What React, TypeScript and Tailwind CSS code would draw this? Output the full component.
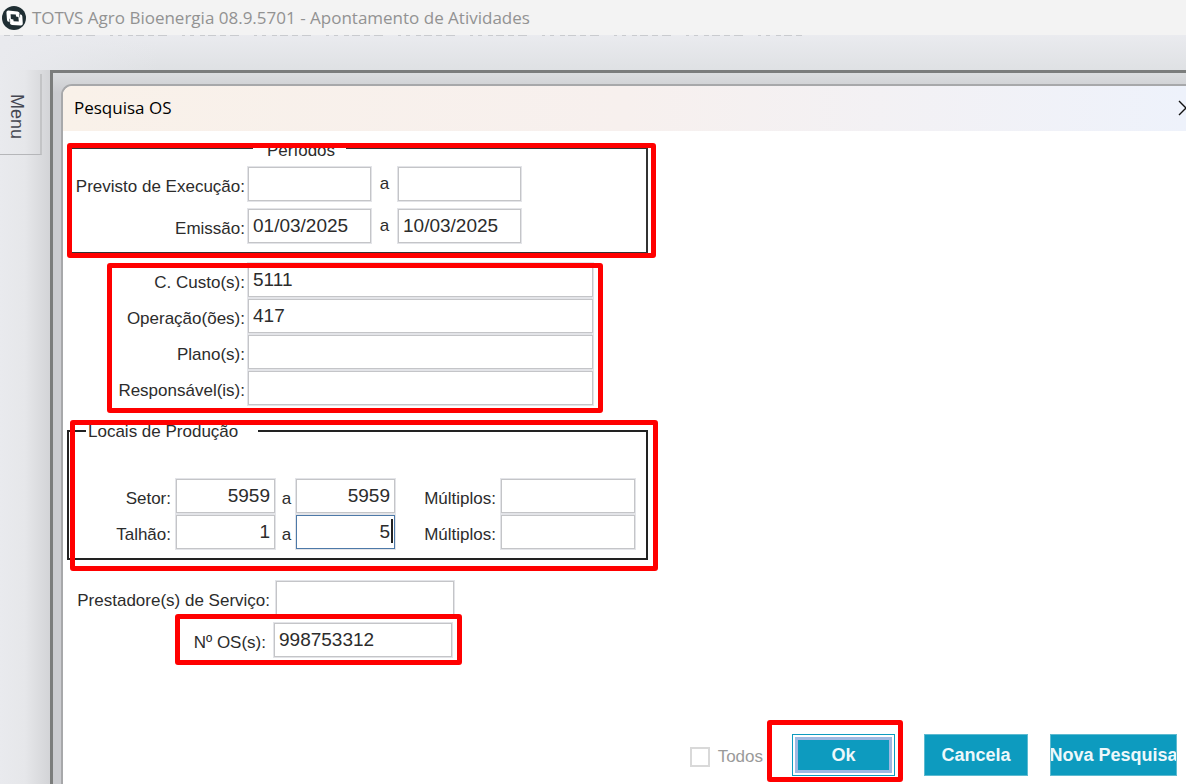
import type { InputHTMLAttributes, ReactNode } from "react";

const Highlight = ({ className }: { className: string }) => (
  <span
    aria-hidden="true"
    className={`pointer-events-none absolute z-10 rounded-[3px] border-[5px] border-[#ff0000] ${className}`}
  />
);

const Field = ({ className = "", ...props }: InputHTMLAttributes<HTMLInputElement>) => (
  <input
    type="text"
    className={`h-[34px] shrink-0 border border-[#c4c5c8] bg-white px-1 pb-px text-[19px] leading-6 text-[#2c2c2c] ring-1 ring-[#e3e4e8] outline-none focus:border-[#4d79a8] ${className}`}
    {...props}
  />
);

const Label = ({ htmlFor, className, children }: { htmlFor: string; className: string; children: ReactNode }) => (
  <label htmlFor={htmlFor} className={`shrink-0 pt-1.5 text-right whitespace-nowrap ${className}`}>
    {children}
  </label>
);

const Logo = () => (
  <svg viewBox="0 0 24 24" className="size-6 shrink-0" aria-hidden="true">
    <circle cx="12" cy="12" r="12" fill="#1f2e33" />
    <path d="M6.2 4.6 L15.5 5.4 Q17.6 5.7 17.7 7.6 L17.8 8.4 L19 8.6 Q20.2 9 20.3 10.3 L20.8 17.4 Q20.8 19.6 18.8 19.5 L10 18.9 Q8 18.6 7.8 16.8 L7.7 15.9 L6.6 15.8 Q5.2 15.4 5 14 L4.4 6.6 Q4.4 4.7 6.2 4.6Z" fill="#fff" />
    <path d="M8.6 8.2 L13.8 8.6 L14 10.6 L16.4 10.9 L16.8 15.6 L11.6 15.2 L11.4 13.4 L8.9 13Z" fill="#1f2e33" />
    <path d="M17.4 7.6 L17.7 11.4 M7.8 16.8 L7.5 12.8" stroke="#1f2e33" strokeWidth="0.6" />
  </svg>
);

const periods = [
  { id: "execucao", label: "Previsto de Execução:", from: "", to: "" },
  { id: "emissao", label: "Emissão:", from: "01/03/2025", to: "10/03/2025" },
];

const filters = [
  { id: "custo", label: "C. Custo(s):", value: "5111" },
  { id: "operacao", label: "Operação(ões):", value: "417" },
  { id: "plano", label: "Plano(s):", value: "" },
  { id: "responsavel", label: "Responsável(is):", value: "" },
];

const places = [
  { id: "setor", label: "Setor:", from: "5959", to: "5959" },
  { id: "talhao", label: "Talhão:", from: "1", to: "5", active: true },
];

const SearchForm = () => (
  <div className="pt-1.5 pl-1">
    {/* Períodos */}
    <div className="relative w-[581px]">
      <fieldset className="border-2 border-[#333] pt-2 pb-[9px]">
        <legend className="ml-[184px] h-[22px] w-[93px] pt-1 pl-3.5 leading-5">Períodos</legend>
        <div className="flex flex-col gap-2">
          {periods.map((p) => (
            <div key={p.id} className="flex items-center">
              <Label htmlFor={p.id} className="mr-[3px] w-44">
                {p.label}
              </Label>
              <Field id={p.id} defaultValue={p.from} className="w-[123px]" />
              <span className="w-[27px] text-center">a</span>
              <Field aria-label={`${p.label} até`} defaultValue={p.to} className="w-[123px]" />
            </div>
          ))}
        </div>
      </fieldset>
      <Highlight className="top-1.5 -right-2 -bottom-1 left-0" />
    </div>

    <div className="relative mt-[9px] flex w-fit flex-col gap-0.5">
      {filters.map((f) => (
        <div key={f.id} className="flex items-center">
          <Label htmlFor={f.id} className="mr-[3px] w-[178px]">
            {f.label}
          </Label>
          <Field id={f.id} defaultValue={f.value} className="w-[345px]" />
        </div>
      ))}
      <Highlight className="top-0 -right-2.5 -bottom-2 left-10" />
    </div>

    {/* Locais de Produção */}
    <div className="relative mt-[15px] w-[581px]">
      <fieldset className="border-2 border-[#222] pt-[37px] pb-[9px]">
        <legend className="ml-[17px] h-[22px] w-[172px] pt-0.5 pl-0.5 leading-5">Locais de Produção</legend>
        <div className="flex flex-col gap-0.5">
          {places.map((p) => (
            <div key={p.id} className="flex items-center">
              <Label htmlFor={p.id} className="mr-[5px] w-[102px]">
                {p.label}
              </Label>
              <Field id={p.id} defaultValue={p.from} className="w-[99px] text-right" />
              <span className="w-[21px] pt-1.5 pl-0.5 text-center">a</span>
              <div className="relative flex">
                <Field
                  aria-label={`${p.label} até`}
                  defaultValue={p.to}
                  className={`w-[99px] text-right ${p.active ? "border-[#4d79a8]!" : ""}`}
                />
                {p.active && <span className="absolute top-1 right-0.5 h-6 w-0.5 bg-[#222]" />}
              </div>
              <Label htmlFor={`${p.id}-multiplos`} className="mr-[5px] w-[101px]">
                Múltiplos:
              </Label>
              <Field id={`${p.id}-multiplos`} className="w-[134px]" />
            </div>
          ))}
        </div>
      </fieldset>
      <Highlight className="top-0 -right-2.5 -bottom-[11px] left-[3px]" />
    </div>

    <div className="mt-[21px] flex w-fit flex-col gap-2">
      <div className="flex items-center">
        <Label htmlFor="prestador" className="mr-1.5 w-[203px]">
          Prestadore(s) de Serviço:
        </Label>
        <Field id="prestador" className="w-[178px]" />
      </div>
      <div className="relative flex w-fit items-center">
        <Label htmlFor="os" className="mr-2 w-[199px]">
          Nº OS(s):
        </Label>
        <Field id="os" defaultValue="998753312" className="w-[178px]" />
        <Highlight className="-top-[9px] -right-2.5 -bottom-2 left-[108px]" />
      </div>
    </div>
  </div>
);

const action =
  "h-[42px] overflow-hidden border border-[#5dbad0] bg-[#0d9bbf] text-[18px] font-bold whitespace-nowrap text-[#eef8fb]";

const Footer = () => (
  <div className="mt-auto flex items-center justify-end pt-4 pr-[9px] pb-2">
    <label className="flex items-center gap-2 pt-1 text-[#9a9a9a]">
      <input type="checkbox" className="size-5 appearance-none border-2 border-[#d9d9d9] bg-white" />
      Todos
    </label>
    <div className="relative ml-[29px]">
      <button className={`${action} block w-[103px] border-[#0d9bbf]! bg-white! p-0.5`}>
        <span className="flex h-full items-center justify-center border-[3px] border-[#9fb9e2] bg-[#0d9bbf]">Ok</span>
      </button>
      <Highlight className="-top-[14px] -right-2 -bottom-1.5 -left-[25px]" />
    </div>
    <button className={`${action} ml-[29px] w-[104px]`}>Cancela</button>
    <button className={`${action} ml-[22px] flex w-[127px] items-center justify-center`}>Nova Pesquisa</button>
  </div>
);

const App = () => {
  return (
    <div className="flex min-h-screen flex-col overflow-hidden bg-[#e6e7eb] font-['Liberation_Sans',Arial,sans-serif] text-[17px] leading-5 text-[#2c2c2c]">
      <header className="flex h-[35px] items-center gap-1.5 bg-[#f3f3f3] pl-0.5 font-['Open_Sans','Noto_Sans',sans-serif] text-[17px] text-[#929292]">
        <Logo />
        <h1 className="whitespace-nowrap">TOTVS Agro Bioenergia 08.9.5701 - Apontamento de Atividades</h1>
      </header>

      <div className="h-[35px] bg-[linear-gradient(to_right,#e9eaee,transparent_160px),linear-gradient(#eaebef,#dfe1e4)]">
        {/* edge of the caption hidden under the title bar */}
        <svg className="block h-px w-[806px]" aria-hidden="true">
          <line x1="4" y1="0.5" x2="806" y2="0.5" stroke="#c9cbcf" strokeDasharray="6 4 9 15 3 5 4 6 5 3 8 4" />
        </svg>
      </div>

      <div className="flex flex-1">
        <aside className="w-[50px] shrink-0 bg-linear-to-r from-[#e9eaee] via-[#e6e7ea] to-[#d3d4d7] pt-1">
          <div className="flex h-[81px] w-[42px] justify-center border-r-2 border-b border-r-[#c3c4c6] border-b-[#b5b6b9] pt-5 pr-1.5">
            <button className="h-fit text-[18px] leading-5 text-[#454752] [writing-mode:vertical-rl]">Menu</button>
          </div>
        </aside>

        <main className="flex min-w-0 flex-1 border-t-[3px] border-l-[3px] border-[#7b7d7c] bg-linear-to-b from-[#dbdddf] to-[#cbccd0] to-[20px] pt-[11px] pl-2">
          <section className="flex min-w-0 flex-1 flex-col overflow-hidden rounded-tl-[11px] border-t-2 border-l-2 border-[#a7a8aa] bg-white">
            <div className="flex h-[45px] shrink-0 items-center justify-between bg-linear-to-r from-[#f9f1e9] via-[#f7f0ee] to-[#eef2fb] pb-0.5 pl-[11px] font-['Open_Sans','Noto_Sans',sans-serif] text-[17px] text-black">
              <h2>Pesquisa OS</h2>
              <button aria-label="Fechar" className="-mr-2">
                <svg viewBox="0 0 16 16" className="size-4" fill="none" stroke="#111" strokeWidth="1.4">
                  <path d="M1 1 L15 15 M15 1 L1 15" />
                </svg>
              </button>
            </div>
            <SearchForm />
            <Footer />
          </section>
        </main>
      </div>
    </div>
  );
};

export default App;
